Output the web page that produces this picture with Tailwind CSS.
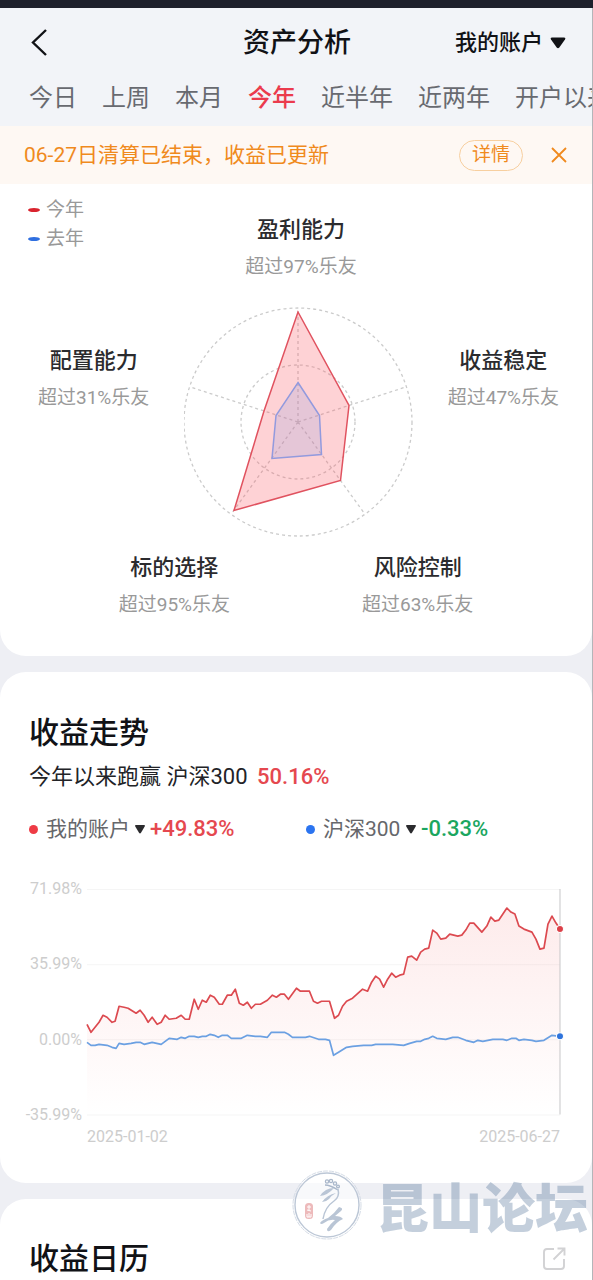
<!DOCTYPE html>
<html lang="zh-CN">
<head>
    <meta charset="UTF-8">
    <meta name="viewport" content="width=device-width, initial-scale=1.0">
    <title>资产分析</title>
    <script src="https://cdn.jsdelivr.net/npm/@tailwindcss/browser@4"></script>
</head>
<body class="bg-[#eeeff4] font-[Roboto,'Noto_Sans_CJK_SC',sans-serif] text-[#111216]">
    <div class="h-2 bg-[#1e202c]"></div>
    <div class="relative flex min-h-[calc(100vh-8px)] flex-col overflow-hidden border-r border-[#b4b5b9]">

        <header class="bg-[#f2f4f8]">
            <div class="grid h-[70px] grid-cols-[1fr_auto_1fr] items-center pl-7 pr-[26px]">
                <button type="button" aria-label="返回" class="w-6">
                    <svg class="h-7 w-6" viewBox="0 0 24 28" fill="none" stroke="#111216" stroke-width="2.4">
                        <path d="M18 1 L5 13.5 L18 26"/>
                    </svg>
                </button>
                <h1 class="text-[27px] font-medium leading-10">资产分析</h1>
                <div class="flex items-center gap-[6px] justify-self-end">
                    <select aria-label="选择账户" class="appearance-none bg-transparent text-[22px] font-medium leading-8">
                        <option>我的账户</option>
                    </select>
                    <svg class="h-3 w-4" viewBox="0 0 16 12" fill="#111216"><path d="M2 .5h12q2 .2 1 2L9.300 10.600q-1.300 1.400-2.600 0L1 2.500Q0 .7 2 .5Z"/></svg>
                </div>
            </div>
            <nav class="flex h-12 gap-[25px] overflow-hidden whitespace-nowrap pb-2 pl-[29px] text-2xl text-[#686a70]">
                <button type="button" class="shrink-0">今日</button>
                <button type="button" class="shrink-0">上周</button>
                <button type="button" class="shrink-0">本月</button>
                <button type="button" class="shrink-0 font-medium text-[#eb3b4d]">今年</button>
                <button type="button" class="shrink-0">近半年</button>
                <button type="button" class="shrink-0">近两年</button>
                <button type="button" class="shrink-0">开户以来</button>
            </nav>
        </header>

        <!-- Settlement notice -->
        <div class="flex h-[58px] items-center bg-[#fef8f3] pl-6 pr-[25px] text-[#f08a1d]">
            <p class="flex-1 text-[21px] leading-8">06-27日清算已结束，收益已更新</p>
            <button type="button" class="h-[31px] w-16 rounded-full border border-[#f7cf9f] text-[19px] leading-7">详情</button>
            <button type="button" aria-label="关闭" class="ml-7">
                <svg class="h-4 w-4" viewBox="0 0 16 16" stroke="#f08a1d" stroke-width="1.8"><path d="M1 1 L15 15 M15 1 L1 15"/></svg>
            </button>
        </div>

        <!-- Ability radar -->
        <section class="rounded-b-[26px] bg-white pb-8 pt-[11px]">
            <div class="grid grid-cols-[1fr_auto_1fr] pl-7 pr-[18px]">
                <ul class="text-[19px] leading-[29px] text-[#999]">
                    <li class="flex items-center gap-[6px]"><span class="h-1 w-3 rounded-[50%] bg-[#d9232e]"></span>今年</li>
                    <li class="flex items-center gap-[6px]"><span class="h-1 w-3 rounded-[50%] bg-[#2f6fe0]"></span>去年</li>
                </ul>
                <div class="mt-[17px] text-center">
                    <h2 class="text-[22px] font-medium leading-9 text-[#2b2b2e]">盈利能力</h2>
                    <p class="text-[19px] leading-[38px] text-[#999]">超过97%乐友</p>
                </div>
            </div>
            <div class="mt-[21px] flex items-start justify-between pl-[38px] pr-[33px]">
                <div class="mt-9 text-center">
                    <h2 class="text-[22px] font-medium leading-9 text-[#2b2b2e]">配置能力</h2>
                    <p class="text-[19px] leading-[38px] text-[#999]">超过31%乐友</p>
                </div>
                <svg class="h-[230px] w-[230px]" viewBox="1 0 230 230" fill="none">
                    <g stroke="#cbcbcb" stroke-width="1.3" stroke-dasharray="3 3">
                        <circle cx="115" cy="115" r="114"/>
                        <circle cx="115" cy="115" r="57"/>
                        <path d="M115 115V1 M115 115L223.400 79.800 M115 115L182 207.200 M115 115L48 207.200 M115 115L6.600 79.800"/>
                    </g>
                    <path d="M115 5 L166 98.500 L157.500 173.500 L51 203.500 L81 104 Z" fill="#fb5c68" fill-opacity=".28" stroke="#e0525f" stroke-width="1.5"/>
                    <path d="M115 75.500 L136.500 108.500 L138.500 147.500 L89 151.500 L93 108.500 Z" fill="#8f9be0" fill-opacity=".22" stroke="#929ade" stroke-width="1.5"/>
                </svg>
                <div class="mt-9 text-center">
                    <h2 class="text-[22px] font-medium leading-9 text-[#2b2b2e]">收益稳定</h2>
                    <p class="text-[19px] leading-[38px] text-[#999]">超过47%乐友</p>
                </div>
            </div>
            <div class="mt-[13px] flex justify-center gap-[132px] text-center">
                <div>
                    <h2 class="text-[22px] font-medium leading-9 text-[#2b2b2e]">标的选择</h2>
                    <p class="text-[19px] leading-[38px] text-[#999]">超过95%乐友</p>
                </div>
                <div>
                    <h2 class="text-[22px] font-medium leading-9 text-[#2b2b2e]">风险控制</h2>
                    <p class="text-[19px] leading-[38px] text-[#999]">超过63%乐友</p>
                </div>
            </div>
        </section>

        <!-- Return trend -->
        <section class="mt-4 rounded-[26px] bg-white pb-9 pt-[41px]">
            <div class="px-[29px]">
                <h2 class="text-[30px] font-medium leading-10">收益走势</h2>
                <p class="mt-1 text-[22px] leading-10 text-[#222327]">今年以来跑赢 沪深300 <span class="ml-1 font-medium text-[#e5484f]">50.16%</span></p>
                <div class="mt-4 grid grid-cols-2 text-[21px] leading-8 text-[#66676b]">
                    <div class="flex items-center">
                        <span class="mr-2 h-[9px] w-[9px] rounded-full bg-[#ee3b45]"></span>
                        <select aria-label="对比账户" class="appearance-none bg-transparent">
                            <option>我的账户</option>
                        </select>
                        <svg class="mx-[5px] h-[9px] w-[10px]" viewBox="0 0 10 9" fill="#2b2b2e"><path d="M1 0h8q1.500.2.700 1.600L6 7.800q-1 1.200-2 0L.3 1.600Q-.5.2 1 0Z"/></svg>
                        <span class="text-[22px] font-medium text-[#e5484f]">+49.83%</span>
                    </div>
                    <div class="flex items-center pl-[10px]">
                        <span class="mr-2 h-[9px] w-[9px] rounded-full bg-[#2b74f0]"></span>
                        <select aria-label="对比指数" class="appearance-none bg-transparent">
                            <option>沪深300</option>
                        </select>
                        <svg class="mx-[5px] h-[9px] w-[10px]" viewBox="0 0 10 9" fill="#2b2b2e"><path d="M1 0h8q1.500.2.700 1.600L6 7.800q-1 1.200-2 0L.3 1.600Q-.5.2 1 0Z"/></svg>
                        <span class="text-[22px] font-medium text-[#1ba65f]">-0.33%</span>
                    </div>
                </div>
            </div>

            <div class="mt-9 flex gap-[5px] pl-[18px] pr-8 text-base leading-4 text-[#cdcdcd]">
                <div class="flex w-16 flex-col items-end justify-between">
                    <span>71.98%</span>
                    <span>35.99%</span>
                    <span>0.00%</span>
                    <span>-35.99%</span>
                </div>
                <div class="flex-1 py-2">
                    <svg class="block h-auto w-full overflow-visible" viewBox="0 0 472 226" fill="none">
                        <defs>
                            <linearGradient id="area" x1="0" y1="0" x2="0" y2="1">
                                <stop offset="0" stop-color="#f04a4a" stop-opacity=".11"/>
                                <stop offset="1" stop-color="#f04a4a" stop-opacity="0"/>
                            </linearGradient>
                        </defs>
                        <path d="M0 .5H472 M0 75.500H472 M0 150.500H472 M0 225.500H472" stroke="#f5f5f5"/>
                        <path fill="url(#area)" d="M0 135 4 143 12 133 16 126 20 128 25 133 28 132 32 117 37 118 41 119 49 124 53 121 57 126 61 133 65 128 70 135 74 133 78 126 82 130 89 129 94 126 98 130 102 130 107 110 111 120 115 111 119 113 123 106 127 108 132 115 135 115 140 106 144 106 148 100 152 114 156 116 160 113 164 119 168 115 173 115 180 111 185 106 189 108 193 105 197 105 201 110 209 99 213 102 222 102 226 112 230 114 234 112 242 112 247 129 251 126 255 117 259 112 265 109 275 100 280 102 284 93 288 87 292 90 296 98 300 90 304 84 308 88 312 86 316 85 320 68 324 67 329 71 333 63 337 60 341 59 345 41 349 44 353 50 358 49 362 45 370 47 374 46 378 41 382 34 386 34 394 43 399 37 403 28 407 32 411 31 415 25 419 19 423 23 427 25 431 37 436 40 444 43 448 50 452 60 456 59 460 35 464 27 468 34 472 40V225H0Z"/>
                        <path d="M472 0V225" stroke="#c6c6c8"/>
                        <g stroke-width="1.7" stroke-linejoin="round">
                            <polyline stroke="#dc4a50" points="0,135 4,143 12,133 16,126 20,128 25,133 28,132 32,117 37,118 41,119 49,124 53,121 57,126 61,133 65,128 70,135 74,133 78,126 82,130 89,129 94,126 98,130 102,130 107,110 111,120 115,111 119,113 123,106 127,108 132,115 135,115 140,106 144,106 148,100 152,114 156,116 160,113 164,119 168,115 173,115 180,111 185,106 189,108 193,105 197,105 201,110 209,99 213,102 222,102 226,112 230,114 234,112 242,112 247,129 251,126 255,117 259,112 265,109 275,100 280,102 284,93 288,87 292,90 296,98 300,90 304,84 308,88 312,86 316,85 320,68 324,67 329,71 333,63 337,60 341,59 345,41 349,44 353,50 358,49 362,45 370,47 374,46 378,41 382,34 386,34 394,43 399,37 403,28 407,32 411,31 415,25 419,19 423,23 427,25 431,37 436,40 444,43 448,50 452,60 456,59 460,35 464,27 468,34 472,40"/>
                            <polyline stroke="#6ba0e2" points="0,153 4,156 8,156 12,155 20,156 25,158 29,159 32,154 37,155 44,154 49,153 53,153 57,155 65,153 74,155 78,152 82,149 90,150 94,148 98,149 102,147 107,147 111,148 115,147 119,147 123,145 127,146 131,148 135,146 140,146 144,149 154,149 160,146 168,147 173,147 180,148 184,143 197,143 201,145 205,148 218,148 222,147 231,150 238,150 242,151 246,166 251,163 259,158 265,157 276,156 284,156 288,155 305,155 316,156 322,154 329,152 333,152 337,150 341,149 345,147 349,149 358,150 365,148 370,148 378,151 386,153 390,151 395,152 405,150 415,150 419,151 424,149 428,149 431,151 436,150 444,151 448,152 456,151 464,146 472,147"/>
                        </g>
                        <circle cx="472" cy="40" r="3.500" fill="#dc4048" stroke="#fff"/>
                        <circle cx="472" cy="147" r="3.500" fill="#2f74dc" stroke="#fff"/>
                    </svg>
                </div>
            </div>
            <div class="mt-1 flex justify-between pl-[87px] pr-8 text-base leading-5 text-[#cdcdcd]">
                <span>2025-01-02</span>
                <span>2025-06-27</span>
            </div>
        </section>

        <!-- Return calendar -->
        <section class="mt-4 flex flex-1 items-start justify-between rounded-t-[26px] bg-white pl-[29px] pr-[26px] pt-10">
            <h2 class="text-[30px] font-medium leading-10">收益日历</h2>
            <button type="button" aria-label="分享" class="mt-2">
                <svg class="h-6 w-6" viewBox="0 0 24 24" fill="none" stroke="#d2d2d4" stroke-width="1.9">
                    <path d="M12 2H5Q2 2 2 5V19Q2 22 5 22H19Q22 22 22 19V12 M11.500 12.500L22 2 M15.500 1.500H22.500V8.500"/>
                </svg>
            </button>
        </section>

        <!-- Forum watermark -->
        <div class="pointer-events-none absolute bottom-10 right-1 flex items-center gap-[14px]">
            <svg class="h-[70px] w-[70px]" viewBox="0 0 70 70" fill="none">
                <circle cx="35" cy="35" r="32" fill="#fff" fill-opacity=".6" stroke="#bcc7d6" stroke-width="1.4"/>
                <circle cx="35" cy="35" r="34" stroke="#d5dce6" stroke-width="1" stroke-dasharray="5 1"/>
                <g stroke="#a9b7ca" stroke-width="1.300">
                    <circle cx="35" cy="11.500" r="1.600"/>
                    <circle cx="39" cy="11" r="1.600"/>
                    <circle cx="43" cy="13.500" r="1.600"/>
                    <circle cx="46" cy="16.500" r="1.400"/>
                    <path d="M33 15Q38 15 46 20"/>
                </g>
                <path d="M46 19Q48 27 42 31Q33 37 31 49" stroke="#b9c5d5" stroke-width="1.500"/>
                <g fill="#b9c5d5">
                    <path d="M28 26Q33 18 42 18Q36 25 28 26Z"/>
                    <path d="M30 32Q35 25 44 23Q40 25 37 29Q34 32 30 32Z"/>
                    <path d="M28 53Q30 50 36 48Q42 44 47 37Q52 38 49 41L43 46Q49 46 51 49Q44 52 39 60Q35 63 35 59Q38 54 43 50Q37 49 32 53Q29 55 28 53Z"/>
                </g>
                <rect x="13" y="33" width="8" height="16" rx="3.500" fill="#edbabb"/>
                <path d="M15 37h4M17 35v5M15 40l4 1M15 44v3h4v-3M17 43v4" stroke="#fff" stroke-width="1"/>
            </svg>
            <span class="font-['Noto_Sans_CJK_SC',sans-serif] text-[53px] font-black leading-[70px] text-[#3c5f8c]/30">昆山论坛</span>
        </div>
    </div>
</body>
</html>
